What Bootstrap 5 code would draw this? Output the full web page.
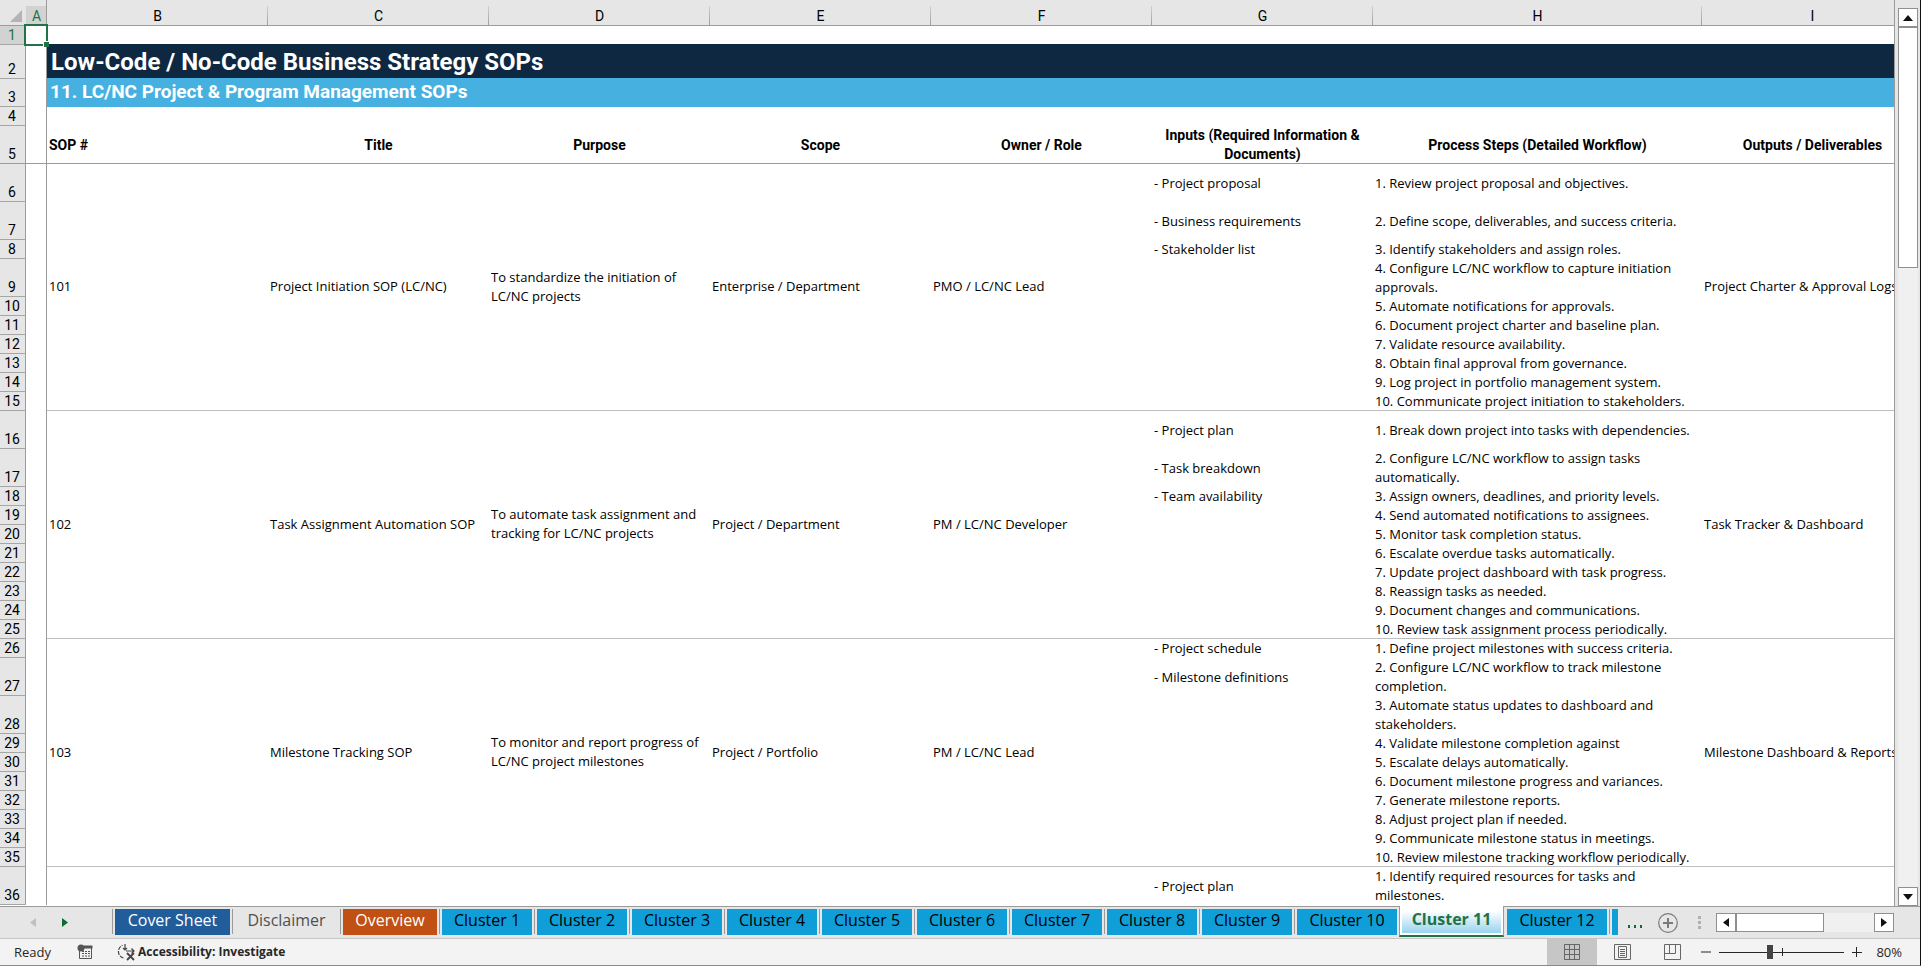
<!DOCTYPE html>
<html lang="en">
<head>
<meta charset="utf-8">
<meta name="viewport" content="width=device-width, initial-scale=1">
<title>Low-Code / No-Code Business Strategy SOPs</title>
<link href="https://cdn.jsdelivr.net/npm/bootstrap@5.3.0/dist/css/bootstrap.min.css" rel="stylesheet">
<style>
  :root { --chrome: #e6e6e6; --line: #9b9b9b; --accent: #217346; }
  body { font-family: Roboto, "Liberation Sans", sans-serif; font-size: 14px; line-height: 19px; color: #000; background: var(--chrome); }
  .workbook { border-right: 1px solid #111; border-bottom: 1px solid #8a8a8a; }
  .pane { border-right: 1px solid var(--line); background: #fff; min-width: 0; }

  /* sheet grid */
  .sheet { table-layout: fixed; border-collapse: separate; border-spacing: 0; width: 1923px; }
  .sheet .c-num { width: 26px; }
  .sheet .c-a { width: 21px; }
  .sheet .c-std { width: 221px; }
  .sheet .c-wide { width: 329px; }
  .sheet th, .sheet td { padding: 0 2px; height: 19px; vertical-align: middle; white-space: nowrap; }
  .sheet td { font-family: "Open Sans", "Noto Sans", sans-serif; font-size: 13px; }
  .sheet td[rowspan] { padding-bottom: 2px; }
  .sheet thead th { height: 26px; padding: 6px 0 0; background: linear-gradient(to bottom, transparent 6px, #d0d0d0 6px, #9b9b9b) right / 1px 100% no-repeat var(--chrome); box-shadow: inset 0 -1px var(--line); font-weight: 400; text-align: center; }
  .sheet tbody th[scope=row] { padding: 0 2px 0 0; background: var(--chrome); box-shadow: inset 0 -1px #a6a6a6, inset -1px 0 var(--line); font-weight: 400; text-align: center; vertical-align: bottom; }
  .sheet thead th.corner { background-image: none; }
  .sheet thead th.picked { background: linear-gradient(to bottom, var(--chrome) 6px, #d2d2d2 6px); box-shadow: inset -1px -1px var(--line); color: var(--accent); }
  .sheet tbody th.picked { background: #d2d2d2; color: var(--accent); }
  .sheet tr.tall > * { height: 38px; }
  .sheet .col-a { box-shadow: inset -1px 0 var(--line); }
  .sheet tr.heads > * { box-shadow: inset 0 -1px var(--line); font-weight: 700; text-align: center; }
  .sheet tr.heads > .col-a { box-shadow: inset -1px -1px var(--line); }
  .sheet tr.heads > th[scope=row] { font-weight: 400; box-shadow: inset -1px -1px var(--line); }
  .sheet .end { box-shadow: inset 0 -1px #bfbfbf; }
  .sheet .banner, .sheet .subbanner { font-family: Roboto, "Liberation Sans", sans-serif; font-weight: 700; color: #fff; }
  .sheet .banner { height: 34px; padding-left: 4px; background: #0f2841; box-shadow: 0 -1px #0f2841; font-size: 24px; line-height: 33px; }
  .sheet .subbanner { height: 28px; padding-left: 3px; background: #46b1e1; box-shadow: 0 -1px #46b1e1; font-size: 19px; line-height: 26px; vertical-align: top; }
  .cursor-box { inset: -2px -1px -1px -2px; border: 2px solid var(--accent); }
  .cursor-box::after { content: ""; position: absolute; right: -3px; bottom: -3px; width: 6px; height: 6px; background: var(--accent); border: 1px solid #fff; border-width: 1px 0 0 1px; }

  /* scroll bars */
  .vbar { width: 25px; padding: 8px 2px 0 3px; }
  .sb-btn { width: 20px; height: 19px; padding: 0; border: 1px solid #8f8f8f; background: #fff; line-height: 0; }
  .sb-track { background: #f0f0f0; }
  .sb-thumb { background: #fff; border: 1px solid #8f8f8f; }
  .vbar .sb-thumb { height: 28%; }
  .hbar { width: 178px; height: 19px; margin: 0 26px 0 11px; }
  .hbar .sb-thumb { width: 64%; }

  /* sheet tabs */
  .tabstrip { height: 33px; border-top: 1px solid var(--line); border-bottom: 1px solid #c6c6c6; font-family: "Open Sans", "Noto Sans", sans-serif; font-size: 16px; }
  .navs { width: 112px; padding-left: 30px; gap: 26px; }
  .navs button, .plain { border: 0; background: none; padding: 0; line-height: 0; color: inherit; }
  .tab-slot { width: 95px; height: 31px; padding: 2px 2px 3px 0; flex: none; }
  .tab-slot::before { content: ""; width: 1px; height: 25px; background: #9b9b9b; margin-right: 2px; flex: none; }
  .tab-slot > a { flex: 1 1 auto; height: 26px; line-height: 23px; text-align: center; text-decoration: none; color: #000; background: #0f9ed8; }
  .tab-slot.w-xl { width: 120px; } .tab-slot.w-l { width: 108px; } .tab-slot.w-m { width: 99px; } .tab-slot.w-s { width: 105px; }
  .tab-slot > a.navy { background: #215c9b; color: #fff; }
  .tab-slot > a.none { background: none; color: #505050; }
  .tab-slot > a.rust { background: #c05014; color: #fff; }
  .tab-slot.current { margin-top: -1px; padding: 1px 2px 2px 0; background: #fff; border: 1px solid var(--line); border-width: 0 1px; border-bottom: 2px solid var(--accent); }
  .tab-slot.current::before { width: 0; }
  .tab-slot.current > a { color: var(--accent); font-weight: 700; line-height: 25px; background: linear-gradient(#fff 15%, #98d3ee); }
  .tab-slot.after::before { visibility: hidden; }
  .tab-slot.sliver { width: 9px; padding-right: 0; }

  /* status bar */
  .statusbar { height: 26px; padding-left: 14px; background: #f3f3f3; color: #262626; font-family: "Open Sans", "Noto Sans", sans-serif; font-size: 13px; }
  .statusbar .view { width: 50px; height: 26px; }
  .statusbar .view.on { background: #c6c6c6; }
  .macro { margin-left: 2px; }
  .access { font-size: 12px; gap: 2px; }
  .pct { margin: 0 18px 0 14px; }
  .zoomer { width: 125px; }
  .zoomer::after { content: ""; position: absolute; left: 50%; top: 9px; width: 1px; height: 8px; background: #262626; }
  .zoomer input { appearance: none; -webkit-appearance: none; width: 100%; height: 26px; margin: 0; background: linear-gradient(#262626, #262626) center / 100% 1px no-repeat; }
  .zoomer input::-webkit-slider-thumb { -webkit-appearance: none; width: 6px; height: 14px; background: #444; border: 0; border-radius: 0; }
</style>
</head>
<body>
<div class="workbook vh-100 d-flex flex-column overflow-hidden">
  <main class="d-flex flex-grow-1 overflow-hidden">
    <div class="pane flex-grow-1 overflow-hidden">
      <table class="sheet">
        <colgroup>
          <col class="c-num"><col class="c-a"><col class="c-std"><col class="c-std"><col class="c-std"><col class="c-std"><col class="c-std"><col class="c-std"><col class="c-wide"><col class="c-std">
        </colgroup>
        <thead>
          <tr>
            <th class="corner"><svg class="d-block ms-auto me-1" width="12" height="12" viewBox="0 0 12 12"><path d="M12 0v12H0z" fill="#b4b4b4"/></svg></th>
            <th class="picked">A</th><th>B</th><th>C</th><th>D</th><th>E</th><th>F</th><th>G</th><th>H</th><th>I</th>
          </tr>
        </thead>
        <tbody>
          <tr><th scope="row" class="picked">1</th><td class="col-a position-relative"><span class="cursor-box position-absolute"></span></td><td colspan="8"></td></tr>
          <tr><th scope="row">2</th><td class="col-a"></td><td colspan="8" class="banner">Low-Code / No-Code Business Strategy SOPs</td></tr>
          <tr><th scope="row">3</th><td class="col-a"></td><td colspan="8" class="subbanner">11. LC/NC Project &amp; Program Management SOPs</td></tr>
          <tr><th scope="row">4</th><td class="col-a"></td><td colspan="8"></td></tr>
          <tr class="tall heads"><th scope="row">5</th><td class="col-a"></td><th scope="col" class="text-start">SOP #</th><th scope="col">Title</th><th scope="col">Purpose</th><th scope="col">Scope</th><th scope="col">Owner / Role</th><th scope="col">Inputs (Required Information &amp;<br>Documents)</th><th scope="col">Process Steps (Detailed Workflow)</th><th scope="col">Outputs / Deliverables</th></tr>

          <tr class="tall"><th scope="row">6</th><td class="col-a"></td><td rowspan="10" class="end">101</td><td rowspan="10" class="end">Project Initiation SOP (LC/NC)</td><td rowspan="10" class="end">To standardize the initiation of<br>LC/NC projects</td><td rowspan="10" class="end">Enterprise / Department</td><td rowspan="10" class="end">PMO / LC/NC Lead</td><td>- Project proposal</td><td>1. Review project proposal and objectives.</td><td rowspan="10" class="end">Project Charter &amp; Approval Logs</td></tr>
          <tr class="tall"><th scope="row">7</th><td class="col-a"></td><td>- Business requirements</td><td>2. Define scope, deliverables, and success criteria.</td></tr>
          <tr><th scope="row">8</th><td class="col-a"></td><td>- Stakeholder list</td><td>3. Identify stakeholders and assign roles.</td></tr>
          <tr class="tall"><th scope="row">9</th><td class="col-a"></td><td></td><td>4. Configure LC/NC workflow to capture initiation<br>approvals.</td></tr>
          <tr><th scope="row">10</th><td class="col-a"></td><td></td><td>5. Automate notifications for approvals.</td></tr>
          <tr><th scope="row">11</th><td class="col-a"></td><td></td><td>6. Document project charter and baseline plan.</td></tr>
          <tr><th scope="row">12</th><td class="col-a"></td><td></td><td>7. Validate resource availability.</td></tr>
          <tr><th scope="row">13</th><td class="col-a"></td><td></td><td>8. Obtain final approval from governance.</td></tr>
          <tr><th scope="row">14</th><td class="col-a"></td><td></td><td>9. Log project in portfolio management system.</td></tr>
          <tr><th scope="row">15</th><td class="col-a"></td><td class="end"></td><td class="end">10. Communicate project initiation to stakeholders.</td></tr>

          <tr class="tall"><th scope="row">16</th><td class="col-a"></td><td rowspan="10" class="end">102</td><td rowspan="10" class="end">Task Assignment Automation SOP</td><td rowspan="10" class="end">To automate task assignment and<br>tracking for LC/NC projects</td><td rowspan="10" class="end">Project / Department</td><td rowspan="10" class="end">PM / LC/NC Developer</td><td>- Project plan</td><td>1. Break down project into tasks with dependencies.</td><td rowspan="10" class="end">Task Tracker &amp; Dashboard</td></tr>
          <tr class="tall"><th scope="row">17</th><td class="col-a"></td><td>- Task breakdown</td><td>2. Configure LC/NC workflow to assign tasks<br>automatically.</td></tr>
          <tr><th scope="row">18</th><td class="col-a"></td><td>- Team availability</td><td>3. Assign owners, deadlines, and priority levels.</td></tr>
          <tr><th scope="row">19</th><td class="col-a"></td><td></td><td>4. Send automated notifications to assignees.</td></tr>
          <tr><th scope="row">20</th><td class="col-a"></td><td></td><td>5. Monitor task completion status.</td></tr>
          <tr><th scope="row">21</th><td class="col-a"></td><td></td><td>6. Escalate overdue tasks automatically.</td></tr>
          <tr><th scope="row">22</th><td class="col-a"></td><td></td><td>7. Update project dashboard with task progress.</td></tr>
          <tr><th scope="row">23</th><td class="col-a"></td><td></td><td>8. Reassign tasks as needed.</td></tr>
          <tr><th scope="row">24</th><td class="col-a"></td><td></td><td>9. Document changes and communications.</td></tr>
          <tr><th scope="row">25</th><td class="col-a"></td><td class="end"></td><td class="end">10. Review task assignment process periodically.</td></tr>

          <tr><th scope="row">26</th><td class="col-a"></td><td rowspan="10" class="end">103</td><td rowspan="10" class="end">Milestone Tracking SOP</td><td rowspan="10" class="end">To monitor and report progress of<br>LC/NC project milestones</td><td rowspan="10" class="end">Project / Portfolio</td><td rowspan="10" class="end">PM / LC/NC Lead</td><td>- Project schedule</td><td>1. Define project milestones with success criteria.</td><td rowspan="10" class="end">Milestone Dashboard &amp; Reports</td></tr>
          <tr class="tall"><th scope="row">27</th><td class="col-a"></td><td>- Milestone definitions</td><td>2. Configure LC/NC workflow to track milestone<br>completion.</td></tr>
          <tr class="tall"><th scope="row">28</th><td class="col-a"></td><td></td><td>3. Automate status updates to dashboard and<br>stakeholders.</td></tr>
          <tr><th scope="row">29</th><td class="col-a"></td><td></td><td>4. Validate milestone completion against</td></tr>
          <tr><th scope="row">30</th><td class="col-a"></td><td></td><td>5. Escalate delays automatically.</td></tr>
          <tr><th scope="row">31</th><td class="col-a"></td><td></td><td>6. Document milestone progress and variances.</td></tr>
          <tr><th scope="row">32</th><td class="col-a"></td><td></td><td>7. Generate milestone reports.</td></tr>
          <tr><th scope="row">33</th><td class="col-a"></td><td></td><td>8. Adjust project plan if needed.</td></tr>
          <tr><th scope="row">34</th><td class="col-a"></td><td></td><td>9. Communicate milestone status in meetings.</td></tr>
          <tr><th scope="row">35</th><td class="col-a"></td><td class="end"></td><td class="end">10. Review milestone tracking workflow periodically.</td></tr>

          <tr class="tall"><th scope="row">36</th><td class="col-a"></td><td></td><td></td><td></td><td></td><td></td><td>- Project plan</td><td>1. Identify required resources for tasks and<br>milestones.</td><td></td></tr>
        </tbody>
      </table>
    </div>
    <div class="vbar d-flex flex-column flex-shrink-0">
      <button class="sb-btn" aria-label="Scroll up"><svg width="10" height="6"><path d="M5 0l5 6H0z" fill="#111"/></svg></button>
      <div class="sb-track flex-grow-1"><div class="sb-thumb"></div></div>
      <button class="sb-btn" aria-label="Scroll down"><svg width="10" height="6"><path d="M0 0h10L5 6z" fill="#111"/></svg></button>
    </div>
  </main>

  <nav class="tabstrip d-flex flex-shrink-0" aria-label="Sheets">
    <div class="navs d-flex align-items-center flex-shrink-0">
      <button aria-label="Previous sheets"><svg width="6" height="9"><path d="M6 0v9L0 4.5z" fill="#c0c0c0"/></svg></button>
      <button aria-label="Next sheets"><svg width="6" height="9"><path d="M0 0v9l6-4.5z" fill="#0d6b34"/></svg></button>
    </div>
    <div class="tab-slot d-flex w-xl"><a href="#" class="navy">Cover Sheet</a></div>
    <div class="tab-slot d-flex w-l"><a href="#" class="none">Disclaimer</a></div>
    <div class="tab-slot d-flex w-m"><a href="#" class="rust">Overview</a></div>
    <div class="tab-slot d-flex"><a href="#">Cluster 1</a></div>
    <div class="tab-slot d-flex"><a href="#">Cluster 2</a></div>
    <div class="tab-slot d-flex"><a href="#">Cluster 3</a></div>
    <div class="tab-slot d-flex"><a href="#">Cluster 4</a></div>
    <div class="tab-slot d-flex"><a href="#">Cluster 5</a></div>
    <div class="tab-slot d-flex"><a href="#">Cluster 6</a></div>
    <div class="tab-slot d-flex"><a href="#">Cluster 7</a></div>
    <div class="tab-slot d-flex"><a href="#">Cluster 8</a></div>
    <div class="tab-slot d-flex"><a href="#">Cluster 9</a></div>
    <div class="tab-slot d-flex w-s"><a href="#">Cluster 10</a></div>
    <div class="tab-slot d-flex w-s current"><a href="#" aria-current="page">Cluster 11</a></div>
    <div class="tab-slot d-flex w-s after"><a href="#">Cluster 12</a></div>
    <div class="tab-slot d-flex sliver"><a href="#" aria-label="Next cluster"></a></div>
    <div class="d-flex align-items-center flex-grow-1 justify-content-end">
      <button class="plain me-3" aria-label="More sheets"><svg class="d-block" width="14" height="10"><path d="M0 7h2v3H0zM6 7h2v3H6zM12 7h2v3h-2z" fill="#0d6b34"/></svg></button>
      <button class="plain" aria-label="New sheet"><svg width="20" height="20" viewBox="0 0 20 20" fill="none" stroke="#7a7a7a"><circle cx="10" cy="10" r="9.3" stroke-width="1.2"/><path d="M10 5v10M5 10h10" stroke-width="2"/></svg></button>
      <svg class="ms-3 px-1" width="11" height="13"><path d="M0 0h3v3H0zM0 5h3v3H0zM0 10h3v3H0z" fill="#b0b0b0"/></svg>
      <div class="hbar d-flex">
        <button class="sb-btn" aria-label="Scroll left"><svg width="6" height="9"><path d="M6 0v9L0 4.5z" fill="#111"/></svg></button>
        <div class="sb-track flex-grow-1 d-flex"><div class="sb-thumb"></div></div>
        <button class="sb-btn" aria-label="Scroll right"><svg width="6" height="9"><path d="M0 0v9l6-4.5z" fill="#111"/></svg></button>
      </div>
    </div>
  </nav>

  <footer class="statusbar d-flex align-items-center flex-shrink-0">
    <span class="me-4">Ready</span>
    <button class="plain macro" aria-label="Record macro"><svg width="16" height="16" viewBox="0 0 16 16"><path d="M7 1.500h8.500v3H2.500z" fill="#555"/><circle cx="4" cy="4" r="3.500" fill="#555"/><path d="M2.500 7v7.500h12V4" fill="none" stroke="#555"/><path d="M5 7.500h8M5 9.500h8M5 12h8" stroke="#555" stroke-dasharray="2 1"/></svg></button>
    <button class="plain access d-flex align-items-center ms-4">
      <svg width="19" height="18" viewBox="0 0 19 18" fill="none" stroke="#444" stroke-width="1.2"><path d="M6.500 15A6.800 6.800 0 0 1 5.500 2.200" stroke-dasharray="4 1.200"/><path d="M8 1v5.500M6 5l2 2 2-2M9 8h8M14.500 5.500L17 8l-2.500 2.500"/><path d="M10 10l7 7M17 10l-7 7" stroke-width="1.800"/></svg>
      <span class="fw-bold">Accessibility: Investigate</span>
    </button>
    <div class="d-flex align-items-center ms-auto">
      <button class="plain view on" aria-label="Normal view"><svg width="16" height="16" viewBox="0 0 16 16"><path d="M.5.500h15v15H.5zM5.500.500v15M10.500.500v15M.5 5.500h15M.5 10.500h15" fill="none" stroke="#666"/></svg></button>
      <button class="plain view" aria-label="Page layout view"><svg width="17" height="16" viewBox="0 0 17 16" fill="none" stroke="#666"><path d="M.5.500h16v15H.5zM4.500 2.500h8v11h-8zM6 5.500h5M6 7.500h5M6 9.500h5M6 11.500h5"/></svg></button>
      <button class="plain view" aria-label="Page break preview"><svg width="17" height="16" viewBox="0 0 17 16" fill="none" stroke="#666"><path d="M.5.500h16v15H.5zM.5 9.500h11V.5M5.500.500v9"/></svg></button>
      <button class="plain ms-1 me-2" aria-label="Zoom out"><svg width="10" height="10"><path d="M0 5h10" stroke="#262626"/></svg></button>
      <div class="zoomer position-relative d-flex"><input type="range" min="0" max="100" value="40" aria-label="Zoom"></div>
      <button class="plain ms-2" aria-label="Zoom in"><svg width="10" height="10"><path d="M0 5.500h10M4.500 0v10" stroke="#262626"/></svg></button>
      <button class="plain pct">80%</button>
    </div>
  </footer>
</div>
<script src="https://cdn.jsdelivr.net/npm/bootstrap@5.3.0/dist/js/bootstrap.bundle.min.js"></script>
</body>
</html>
